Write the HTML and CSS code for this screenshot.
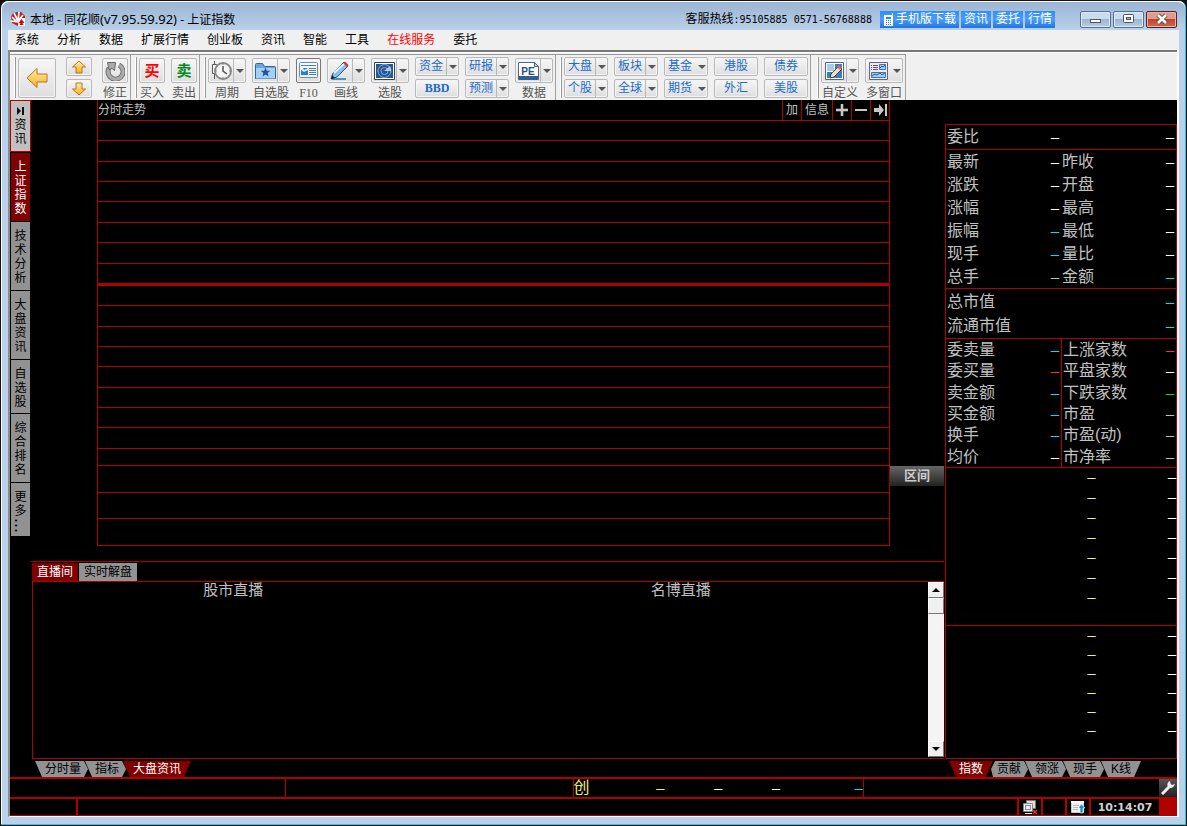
FILE: index.html
```html
<!DOCTYPE html>
<html lang="zh-CN">
<head>
<meta charset="utf-8">
<title>本地 - 同花顺(v7.95.59.92) - 上证指数</title>
<link rel="stylesheet" href="styles.css">
</head>
<body>
<div class="window">
  <header class="titlebar">
    <svg class="app-icon" width="16" height="16" viewBox="0 0 16 16"><path d="M1 6 3 2l4-1 4 0 4 4v9l-2 1H8L2 12z" fill="#b81c24"/><path d="m2 6 5 5M4 2l4 8M9 1 8 10M13 4l-5 6M1 10l7 1" stroke="#fff" stroke-width="1.700"/><path d="M8 7h7v8H8z" fill="#fff"/><path d="m11.500 8 3 4h-2l1 2h-4l1-2h-2z" fill="#d00"/></svg>
    <h1 class="title">本地 - 同花顺<span class="version">(v7.95.59.92)</span> - 上证指数</h1>
    <span class="hotline">客服热线<span class="phone">:95105885 0571-56768888</span></span>
    <nav class="promo">
      <a href="#"><svg width="11" height="13" viewBox="0 0 11 13"><path d="M1 2h8V0h1v13H1z" fill="#fff"/><path d="M3 4h5v2H3zM3 7h1v1H3zm2 0h1v1H5zm2 0h1v1H7zM3 9h1v1H3zm2 0h1v1H5zm2 0h1v1H7zm-4 2h1v1H3zm2 0h1v1H5zm2 0h1v1H7z" fill="#2a86ee"/></svg>手机版下载</a>
      <a href="#">资讯</a>
      <a href="#">委托</a>
      <a href="#">行情</a>
    </nav>
    <div class="controls">
      <button type="button" aria-label="最小化"><svg width="12" height="12" viewBox="0 0 12 12"><rect x=".5" y="6.500" width="10" height="3" fill="#fff" stroke="#555"/></svg></button>
      <button type="button" aria-label="最大化"><svg width="12" height="12" viewBox="0 0 12 12"><rect x=".5" y="1.500" width="10" height="8" rx="1" fill="#fff" stroke="#555"/><rect x="3.500" y="4.500" width="4" height="2" fill="#9bb5d3" stroke="#555"/></svg></button>
      <button type="button" class="close" aria-label="关闭"><svg width="14" height="12" viewBox="0 0 14 12"><path d="m3 2 8 8m0-8-8 8" stroke="#543" stroke-width="4.500"/><path d="m3 2 8 8m0-8-8 8" stroke="#fff" stroke-width="2.600"/></svg></button>
    </div>
  </header>

  <nav class="menubar">
    <button type="button">系统</button><button type="button">分析</button><button type="button">数据</button><button type="button">扩展行情</button><button type="button">创业板</button><button type="button">资讯</button><button type="button">智能</button><button type="button">工具</button><button type="button" class="hot">在线服务</button><button type="button">委托</button>
  </nav>

  <div class="client">
    <div class="toolbar">
      <div class="strip">
        <div class="group wide">
          <span class="grip"></span>
          <button type="button" class="btn back" aria-label="后退"><svg width="22" height="22" viewBox="0 0 22 22"><path d="m1 11 10-9.500V7h10v8H11v5.500z" fill="url(#gold)" stroke="#b8741a"/><defs><linearGradient id="gold" x2="0" y2="1"><stop stop-color="#fff0a8"/><stop offset="1" stop-color="#f5ac28"/></linearGradient></defs></svg></button>
          <div class="stack">
            <button type="button" class="btn small" aria-label="上移"><svg width="14" height="14" viewBox="0 0 14 14"><path d="m7 1 6.500 6H10v6H4V7H.5z" fill="url(#gold)" stroke="#b8741a"/></svg></button>
            <button type="button" class="btn small" aria-label="下移"><svg width="14" height="14" viewBox="0 0 14 14"><path d="m7 13 6.500-6H10V1H4v6H.5z" fill="url(#gold)" stroke="#b8741a"/></svg></button>
          </div>
          <label class="tile"><button type="button" class="btn"><svg width="20" height="20" viewBox="0 0 20 20"><path d="M4 7a7.500 7.500 0 1 0 10-3" fill="none" stroke="#666" stroke-width="5"/><path d="M4 7a7.500 7.500 0 1 0 10-3" fill="none" stroke="#aaa" stroke-width="3.400"/><path d="M2.500 1.500h8l-1 8-2.500-2-3 1z" fill="#aaa" stroke="#666"/></svg></button>修正</label>
        </div>
        <div class="group">
          <span class="grip"></span>
          <label class="tile"><button type="button" class="btn trade buy">买</button>买入</label>
          <label class="tile"><button type="button" class="btn trade sell">卖</button>卖出</label>
        </div>
        <div class="group">
          <span class="grip"></span>
          <label class="tile"><button type="button" class="btn split"><span class="face"><svg width="21" height="20" viewBox="0 0 21 20"><path d="M3.500 0v18" stroke="#555"/><path d="M1.500 3.500h4v9h-4z" fill="#fff" stroke="#555"/><circle cx="12" cy="10" r="8" fill="#f6f6f6" stroke="#888" stroke-width="2"/><path d="M12 5v5l4 3" fill="none" stroke="#555" stroke-width="1.500"/><path d="M12 2v2m0 12v2m-8-8h2m12 0h2" stroke="#888"/></svg></span><span class="arrow"></span></button>周期</label>
          <label class="tile"><button type="button" class="btn split"><span class="face"><svg width="21" height="18" viewBox="0 0 21 18"><path d="M.5 16.500v-14q0-1 1-1h6l2 3h10q1 0 1 1v11z" fill="#6ba6de" stroke="#31659c"/><path d="M1 6h19v10.500H1z" fill="#a5d0f3"/><path d="m10.500 5.500 1.300 3.200h3.500l-2.700 2.300 1 3.500-3.100-2-3.100 2 1-3.500-2.700-2.300h3.500z" fill="#1e5494"/></svg></span><span class="arrow"></span></button>自选股</label>
          <label class="tile f10"><button type="button" class="btn"><svg width="19" height="17" viewBox="0 0 19 17"><rect x=".5" y=".5" width="18" height="15" rx="1" fill="#f4f9ff" stroke="#6b8cb3"/><path d="M2 3h15v1H2zm8 3h7v1h-7zm0 2h7v1h-7zm0 2h7v1h-7zm0 2h7v1h-7z" fill="#4c7fb5"/><path d="M2 6h7v7H2z" fill="#2b7cd3"/><path d="M2 6h2l1 2 2-1 2-1v2L5 10 2 8z" fill="#dff0ff"/></svg></button>F10</label>
          <label class="tile"><button type="button" class="btn split"><span class="face"><svg width="22" height="20" viewBox="0 0 22 20"><path d="M3 18h14" stroke="#49b" stroke-width="2"/><path d="m2 18 2-6L15 1l4 4L8 16z" fill="#8cbde8" stroke="#245b94"/><path d="m5 12 11-10" stroke="#e5f3ff" stroke-width="2"/><path d="m14 2 2-1.500 3.500 3.500-1.500 2z" fill="#d33"/><path d="m2 18 1-4 3 3z" fill="#222"/></svg></span><span class="arrow"></span></button>画线</label>
          <label class="tile"><button type="button" class="btn split"><span class="face"><svg width="21" height="18" viewBox="0 0 21 18"><path d="M.5.5h20v17H.5z" fill="#fff" stroke="#345"/><path d="M2 2h17v14H2z" fill="#29548d"/><g fill="none" stroke="#7fb1e4"><circle cx="10.500" cy="9" r="6.500"/><circle cx="10.500" cy="9" r="3.500"/></g><path d="m10 9 6-5a7 7 0 0 1 1 5z" fill="#a5d0f3"/></svg></span><span class="arrow"></span></button>选股</label>
          <div class="stack">
            <button type="button" class="btn small split"><span class="face">资金</span><span class="arrow"></span></button>
            <button type="button" class="btn small bbd">BBD</button>
          </div>
          <div class="stack">
            <button type="button" class="btn small split"><span class="face">研报</span><span class="arrow"></span></button>
            <button type="button" class="btn small split"><span class="face">预测</span><span class="arrow"></span></button>
          </div>
          <label class="tile"><button type="button" class="btn split"><span class="face"><svg width="21" height="18" viewBox="0 0 21 18"><path d="M.5.5h16l4 4v13H.5z" fill="#fff" stroke="#567"/><path d="M1 14h19v4H1z" fill="#315f94"/><path d="M16.500.5v4h4z" fill="#ccd" stroke="#567"/><text x="10" y="13" text-anchor="middle" class="pe">PE</text></svg></span><span class="arrow"></span></button>数据</label>
        </div>
        <div class="group">
          <span class="grip"></span>
          <div class="stack">
            <button type="button" class="btn small split"><span class="face">大盘</span><span class="arrow"></span></button>
            <button type="button" class="btn small split"><span class="face">个股</span><span class="arrow"></span></button>
          </div>
          <div class="stack">
            <button type="button" class="btn small split"><span class="face">板块</span><span class="arrow"></span></button>
            <button type="button" class="btn small split"><span class="face">全球</span><span class="arrow"></span></button>
          </div>
          <div class="stack">
            <button type="button" class="btn small split plain"><span class="face">基金</span><span class="arrow"></span></button>
            <button type="button" class="btn small split plain"><span class="face">期货</span><span class="arrow"></span></button>
          </div>
          <div class="stack">
            <button type="button" class="btn small text">港股</button>
            <button type="button" class="btn small text">外汇</button>
          </div>
          <div class="stack">
            <button type="button" class="btn small text">债券</button>
            <button type="button" class="btn small text">美股</button>
          </div>
        </div>
        <div class="group last">
          <span class="grip"></span>
          <label class="tile"><button type="button" class="btn split"><span class="face"><svg width="19" height="18" viewBox="0 0 19 18"><path d="M.5.5h18v17H.5z" fill="#fff" stroke="#567"/><path d="M2 2h7v7H2z" fill="#a5ccf0"/><path d="M10 2h7v14H2v-6h8z" fill="#3d7cc0"/><path d="m5 16 1-4 8-8 3 3-8 8z" fill="#f2dfbd" stroke="#345"/><path d="m12 5 2-2 3 3-2 2z" fill="#d66"/></svg></span><span class="arrow"></span></button>自定义</label>
          <label class="tile"><button type="button" class="btn split plain"><span class="face"><svg width="19" height="18" viewBox="0 0 19 18"><path d="M.5.5h18v17H.5z" fill="#e8ecf2" stroke="#667"/><path d="M2 3h1v1H2zm2 0h5v1H4zM2 5h1v1H2zm2 0h5v1H4zM2 7h1v1H2zm2 0h5v1H4z" fill="#734b6b"/><path d="M10.500 2.500h6v5h-6zM2.500 10.500h14v5h-14z" fill="#a5ccf0" stroke="#4873a8"/><path d="m11 6 2-2 1 1 2-2M3 14l3-2 2 1 3-2 2 2 3-2" stroke="#245b94" fill="none"/></svg></span><span class="arrow"></span></button>多窗口</label>
        </div>
      </div>
    </div>

    <main class="workspace">
      <nav class="side">
        <button type="button" class="news"><svg width="8" height="8" viewBox="0 0 8 8"><path d="M0 0v8l4-4zM5 0h2v8H5z" fill="#111"/></svg><span>资讯</span></button>
        <button type="button" class="active"><span>上证指数</span></button>
        <button type="button"><span>技术分析</span></button>
        <button type="button"><span>大盘资讯</span></button>
        <button type="button"><span>自选股</span></button>
        <button type="button"><span>综合排名</span></button>
        <button type="button" class="more"><span>更多</span><i>...</i></button>
      </nav>

      <div class="center">
        <section class="chart">
          <div class="chart-head">
            <h2>分时走势</h2>
            <div class="chart-tools">
              <button type="button">加</button>
              <button type="button">信息</button>
              <button type="button" aria-label="放大"><svg width="12" height="12" viewBox="0 0 12 12"><path d="M5 0h2v5h5v2H7v5H5V7H0V5h5z" fill="#c8c8c8" stroke="#c8c8c8" stroke-width=".6"/></svg></button>
              <button type="button" aria-label="缩小"><svg width="12" height="12" viewBox="0 0 12 12"><path d="M0 5h12v2H0z" fill="#c8c8c8"/></svg></button>
              <button type="button" aria-label="右移"><svg width="13" height="12" viewBox="0 0 13 12"><path d="M0 4h5V0l5 6-5 6V8H0zM11 0h2v12h-2z" fill="#c8c8c8"/></svg></button>
            </div>
          </div>
          <div class="price">
            <i></i><i></i><i></i><i></i><i></i><i></i><i></i><i class="mid"></i><i></i><i></i><i></i><i></i><i></i><i></i><i></i><i></i><i class="gap"></i>
          </div>
          <div class="volume"><i></i><i></i><i></i></div>
          <button type="button" class="range">区间</button>
        </section>

        <section class="live">
          <div class="live-tabs">
            <button type="button" class="active">直播间</button>
            <button type="button">实时解盘</button>
          </div>
          <div class="live-body">
            <h3>股市直播</h3>
            <h3>名博直播</h3>
            <div class="scroll">
              <button type="button" aria-label="向上滚动"><svg width="8" height="4" viewBox="0 0 8 4"><path d="M4 0 8 4H0z"/></svg></button>
              <div class="thumb"></div>
              <button type="button" class="down" aria-label="向下滚动"><svg width="8" height="4" viewBox="0 0 8 4"><path d="M4 4 8 0H0z"/></svg></button>
            </div>
          </div>
        </section>

        <nav class="tabs">
          <button type="button">分时量</button>
          <button type="button">指标</button>
          <button type="button" class="active end">大盘资讯</button>
        </nav>
      </div>

      <aside class="quote">
        <div class="quote-box">
          <table class="q head">
            <tr><th>委比</th><td class="w">–</td><th></th><td class="w">–</td></tr>
          </table>
          <table class="q basic">
            <tr><th>最新</th><td class="w">–</td><th>昨收</th><td class="w">–</td></tr>
            <tr><th>涨跌</th><td class="w">–</td><th>开盘</th><td class="w">–</td></tr>
            <tr><th>涨幅</th><td class="w">–</td><th>最高</th><td class="w">–</td></tr>
            <tr><th>振幅</th><td class="c">–</td><th>最低</th><td class="w">–</td></tr>
            <tr><th>现手</th><td class="c">–</td><th>量比</th><td class="w">–</td></tr>
            <tr><th>总手</th><td>–</td><th>金额</th><td class="c">–</td></tr>
          </table>
          <table class="q cap">
            <tr><th>总市值</th><td></td><th></th><td class="c">–</td></tr>
            <tr><th>流通市值</th><td></td><th></th><td class="c">–</td></tr>
          </table>
          <table class="q market">
            <tr><th>委卖量</th><td class="c">–</td><th>上涨家数</th><td class="r">–</td></tr>
            <tr><th>委买量</th><td class="r">–</td><th>平盘家数</th><td class="w">–</td></tr>
            <tr><th>卖金额</th><td class="c">–</td><th>下跌家数</th><td class="g">–</td></tr>
            <tr><th>买金额</th><td class="c">–</td><th>市盈</th><td>–</td></tr>
            <tr><th>换手</th><td class="c">–</td><th>市盈(动)</th><td>–</td></tr>
            <tr><th>均价</th><td class="w">–</td><th>市净率</th><td>–</td></tr>
          </table>
          <div class="ticks upper">
            <table>
              <tr><td class="y">–</td><td class="w">–</td></tr>
              <tr><td class="y">–</td><td class="w">–</td></tr>
              <tr><td class="y">–</td><td class="w">–</td></tr>
              <tr><td class="y">–</td><td class="w">–</td></tr>
              <tr><td class="y">–</td><td class="w">–</td></tr>
              <tr><td class="y">–</td><td class="w">–</td></tr>
              <tr><td class="y">–</td><td class="w">–</td></tr>
            </table>
          </div>
          <div class="ticks lower">
            <table>
              <tr><td class="y">–</td><td class="w">–</td></tr>
              <tr><td class="y">–</td><td class="w">–</td></tr>
              <tr><td class="y">–</td><td class="w">–</td></tr>
              <tr><td class="y">–</td><td class="w">–</td></tr>
              <tr><td class="y">–</td><td class="w">–</td></tr>
              <tr><td class="y">–</td><td class="w">–</td></tr>
            </table>
          </div>
        </div>
        <nav class="tabs">
          <button type="button" class="active end">指数</button>
          <button type="button" class="lead">贡献</button>
          <button type="button">领涨</button>
          <button type="button">现手</button>
          <button type="button" class="end">K线</button>
        </nav>
      </aside>
    </main>

    <footer class="status">
      <div class="row quotes">
        <span class="cell first"></span>
        <span class="cell second"></span>
        <span class="cell index"><b>创</b><span class="y">–</span><span class="w">–</span><span class="w">–</span><span class="c wide-value">–</span></span>
        <span class="cell rest"></span>
        <button type="button" class="wrench" aria-label="设置"><svg width="14" height="14" viewBox="0 0 14 14"><path d="M1 13 8 6" stroke="#eee" stroke-width="3"/><path d="M9 0a4 4 0 0 0-2 6 4 4 0 0 0 6-1l1-2-3 1-1.500-1.500z" fill="#eee"/></svg></button>
      </div>
      <div class="row system">
        <span class="cell slot"></span>
        <span class="cell message"></span>
        <span class="cell icon"><svg width="16" height="15" viewBox="0 0 16 15"><path d="M4.500.5h9v8h-9z" fill="#ddd" stroke="#777"/><path d="M1.500 3.500h9v8h-9z" fill="#eee" stroke="#888"/><path d="M3 5h6v5H3z" fill="#889"/><path d="M4 6h4v3H4zM3 13h7v1H3z" fill="#eee"/><path d="m11 10 4 4m0-4-4 4" stroke="#e33a22" stroke-width="1.500"/></svg></span>
        <span class="cell blank"></span>
        <span class="cell icon"><svg width="15" height="14" viewBox="0 0 15 14"><path d="M.5 1.500h12v11H.5z" fill="#f2f2f2" stroke="#ccc"/><path d="M0 1h13v2H0z" fill="#fff"/><path d="M2 5h6v1H2zm0 2h5v1H2zm0 2h5v1H2z" fill="#bbb"/><path d="m10.500 4 3.500 4h-2v5H9V8H7z" fill="#1a8de0" stroke="#fff" stroke-width=".6"/></svg></span>
        <time class="cell clock">10:14:07</time>
        <span class="corner"></span>
      </div>
    </footer>
  </div>
</div>
</body>
</html>
```
FILE: styles.css
```css
:root {
  --red: #b00000;
  --dark-red: #800000;
  --grey: #929292;
  --text: #c0c0c0;
}

* { box-sizing: border-box; }

body {
  margin: 0;
  background: #111;
  color: #000;
  font: 12px/16px "Liberation Sans", "Noto Sans CJK SC", sans-serif;
}

h1, h2, h3 { margin: 0; font-size: 12px; font-weight: 400; }
button { margin: 0; padding: 0; border: 0; background: none; color: inherit; font: inherit; white-space: nowrap; }
a { color: inherit; text-decoration: none; }
svg { display: block; flex: none; }
i { font-style: normal; }

.w { color: #fff; }
.c { color: #00e0f0; }
.r { color: #ff3030; }
.g { color: #00e000; }
.y { color: #f0f070; }

/* window frame */
.window {
  display: flex;
  flex-direction: column;
  min-height: 100vh;
  padding: 0 7px 8px;
  border: 1px solid #111;
  border-radius: 8px 8px 0 0;
  background: #b9d1ea;
  box-shadow: inset -1px -1px 0 #25c8e8, inset 1px 1px 0 #fff;
}

.titlebar {
  display: flex;
  align-items: center;
  height: 29px;
  margin: 0 -6px;
  padding: 6px 8px 0 8px;
  background: linear-gradient(#9ab4d2, #b9d1ea);
  background-clip: padding-box;
  border-top: 1px solid #fff;
  border-radius: 7px 7px 0 0;
}
.app-icon { margin-right: 4px; }
.title { flex: 1; font-family: "Noto Sans", "Noto Sans CJK SC", sans-serif; }
.version { font-size: 13px; }
.phone { font-family: "DejaVu Sans Mono", monospace; font-size: 10px; }
.promo { display: flex; gap: 2px; margin-left: 8px; }
.promo a {
  display: flex;
  align-items: center;
  gap: 2px;
  height: 17px;
  padding: 0 3px;
  background: linear-gradient(#2f8ff2, #4a9df5 50%, #1f74e4);
  color: #fff;
}
.controls { display: flex; gap: 2px; margin-left: 25px; }
.controls button {
  display: grid;
  place-items: center;
  width: 31px;
  height: 17px;
  border: 1px solid #56708f;
  border-radius: 2px;
  background: linear-gradient(#c9dbee 50%, #9cb6d2 50%, #b5cde6);
  box-shadow: inset 0 0 0 1px #dce8f5;
}
.controls .close {
  border-color: #5c1e1e;
  background: linear-gradient(#dd9c8e 50%, #bd4330 50%, #cc6a4c);
  box-shadow: inset 0 0 0 1px #e6b3a6;
}

.menubar {
  display: flex;
  gap: 18px;
  height: 20px;
  padding-left: 7px;
  background: #f0f0f0;
}
.menubar .hot { color: #f00; }

.client {
  display: flex;
  flex: 1;
  flex-direction: column;
  border: solid #fff;
  border-width: 0 2px 1px;
  border-left-color: #8c8c8c;
  background: #000;
}

/* toolbar */
.toolbar {
  display: flex;
  padding-top: 2px;
  border-top: 2px solid #777;
  background: #f0f0f0;
  box-shadow: inset 0 1px 0 #fff;
}
.strip { display: flex; height: 46px; border-top: 1px solid #9a9a9a; }
.group { display: flex; gap: 6px; padding: 2px 2px 0 4px; border-right: 1px solid #a0a0a0; }
.group.wide { gap: 10px; }
.grip { width: 2px; margin: 0 -4px 2px 0; border-right: 1px solid #999; background: #fff; }
.wide .grip { margin-right: -8px; }
.group.last { padding-left: 6px; }
.stack { display: flex; flex-direction: column; gap: 3px; }
.btn {
  display: flex;
  align-items: center;
  justify-content: center;
  border: 1px solid #b8b8b8;
  border-radius: 2px;
  background: linear-gradient(#f6f6f6, #dedede);
  box-shadow: inset 0 0 0 1px #f4f4f4;
}
.btn.back { width: 38px; height: 40px; margin-top: 1px; }
.btn.small { width: 44px; height: 19px; color: #1c6ac8; line-height: 17px; }
.wide .btn.small { width: 26px; }
.btn.bbd { font-family: "Liberation Serif", serif; font-weight: 700; font-size: 12px; }
.split .face { display: flex; flex: 1; align-items: center; justify-content: center; align-self: stretch; }
.split .arrow { display: grid; width: 12px; place-items: center; align-self: stretch; border-left: 1px solid #b8b8b8; }
.split .arrow::before { content: ""; border: solid transparent; border-width: 4px 4px 0; border-top-color: #555; }
.plain .arrow { border-left-color: transparent; }
.tile {
  display: flex;
  flex-direction: column;
  align-items: center;
  width: 38px;
  padding-top: 1px;
  color: #555;
  line-height: 20px;
  white-space: nowrap;
}
.tile .btn { width: 100%; height: 25px; flex: none; }
.wide .tile, .tile:has(.trade) { width: 26px; }
.tile.f10 { width: 25px; font-family: "Liberation Serif", serif; }
.tile.f10 .btn { border-color: #777; }
.trade { font-size: 15px; font-weight: 700; }
.buy { color: #f00; }
.sell { color: #008a20; }
.pe { fill: #27527f; font: bold 10px "Liberation Sans", sans-serif; }

/* workspace */
.workspace { display: grid; flex: 1; grid-template-columns: 21px 1fr 233px; }

.side { display: flex; flex-direction: column; gap: 1px; padding: 0 1px; }
.side button {
  display: flex;
  flex-direction: column;
  align-items: center;
  justify-content: center;
  height: 68px;
  padding-top: 2px;
  background: var(--grey);
  color: #000;
}
.side span { width: 12px; line-height: 14px; white-space: normal; word-break: break-all; }
.side .news { height: 52px; margin: 0 -1px; padding: 0; border: 1px solid var(--red); background: var(--text); }
.side .news svg { margin-bottom: 3px; }
.side .active { background: var(--dark-red); color: #fff; }
.side button:nth-child(5) { height: 53px; }
.side .more { height: 53px; justify-content: flex-start; padding-top: 7px; }
.side .more i { font-size: 18px; line-height: 12px; writing-mode: vertical-rl; }

.center { display: flex; flex-direction: column; min-width: 0; }

.chart {
  display: grid;
  flex: 1;
  grid-template-columns: 66px 1fr 54px;
  grid-template-rows: 20px 345fr 80fr 15px;
}
.chart > * { grid-column: 2; }
.chart-head {
  display: flex;
  justify-content: space-between;
  border: solid var(--red);
  border-width: 0 1px 0 1px;
  color: var(--text);
}
.chart-head h2 { line-height: 20px; }
.chart-tools { display: flex; }
.chart-tools button {
  display: grid;
  place-items: center;
  min-width: 19px;
  padding: 0 3px;
  border-left: 1px solid var(--red);
}
.chart-tools button:nth-child(n+3) { padding: 0; }
.price, .volume { display: flex; flex-direction: column; border: solid var(--red); border-width: 0 1px; }
.price { border-top-width: 1px; }
.price i, .volume i { flex: 1; border-bottom: 1px solid var(--red); }
.price .mid { border-bottom-width: 3px; }
.price .gap { flex-grow: 0; flex-basis: 17px; }
.chart .range {
  grid-column: 3;
  grid-row: 3;
  height: 20px;
  background: linear-gradient(#666, #222);
  color: #ccc;
  font-size: 13px;
  font-weight: 700;
  align-self: start;
}

.live { display: flex; flex-direction: column; height: 198px; border-top: 1px solid var(--red); }
.live-tabs { display: flex; gap: 1px; padding: 1px 0 0 1px; }
.live-tabs button { height: 18px; padding: 0 5px; background: var(--grey); color: #000; }
.live-tabs .active { background: var(--dark-red); color: #fff; }
.live-body {
  display: flex;
  flex: 1;
  margin-left: 1px;
  border: solid var(--red);
  border-width: 1px 0 1px 1px;
}
.live-body h3 { flex: 1; padding-right: 47px; color: var(--text); font-size: 15px; text-align: center; }
.scroll {
  display: flex;
  flex-direction: column;
  width: 16px;
  margin-bottom: 1px;
  background: #f4f4f4;
}
.scroll button, .thumb {
  display: grid;
  place-items: center;
  height: 16px;
  border: 1px solid;
  border-color: #fff #777 #777 #fff;
  background: #f0f0f0;
}
.scroll .down { margin-top: auto; }

/* slanted sheet tabs */
.tabs { display: flex; height: 18px; padding: 2px 0 0 4px; }
.quote .tabs { padding-left: 5px; }
.tabs button {
  margin-right: -3px;
  padding: 0 7px 0 10px;
  background: var(--grey);
  color: #000;
  clip-path: polygon(0 0, calc(100% - 4px) 0, 100% 50%, calc(100% - 4px) 100%, 7px 100%);
}
.tabs button.end { padding: 0 10px; clip-path: polygon(0 0, 100% 0, calc(100% - 7px) 100%, 7px 100%); }
.tabs button.lead { padding-left: 7px; clip-path: polygon(5px 0, calc(100% - 4px) 0, 100% 50%, calc(100% - 4px) 100%, 3px 100%, 1px 50%); }
.tabs button.active { background: var(--dark-red); color: #fff; }

/* quote panel */
.quote { display: flex; flex-direction: column; padding-top: 24px; }
.quote-box {
  display: flex;
  flex: 1;
  flex-direction: column;
  margin-left: 1px;
  border: 1px solid var(--red);
}
.quote table { width: 100%; border-spacing: 0; table-layout: fixed; }
.quote .q { border-bottom: 1px solid var(--red); color: var(--text); font-size: 16px; }
.q tr { height: 23px; }
.q th { width: 35%; padding: 0 0 0 1px; font-weight: 400; line-height: 20px; text-align: left; white-space: nowrap; }
.q td { width: 15%; padding: 0 2px 0 0; line-height: 20px; text-align: right; }
.q.head tr, .q.cap tr { height: 24px; }
.q.cap { padding-top: 1px; }
.q.market { height: 129px; }
.q.market tr { height: 21px; }
.q.market th, .q.market td { padding-top: 1px; }
.q.market th:nth-child(3) { border-left: 1px solid var(--red); }
.q td, .ticks, .index span { font-family: "Liberation Serif", serif; }
.ticks { flex: 158; font-size: 16px; }
.ticks.lower { flex: 132; border-top: 1px solid var(--red); }
.ticks tr { height: 20px; }
.ticks.lower tr { height: 19px; }
.ticks td { width: 35%; padding: 0; line-height: 17px; text-align: right; vertical-align: top; }
.ticks td:first-child { width: 65%; }

/* status bars */
.status { border-bottom: 1px solid var(--red); }
.row { display: flex; height: 20px; border-top: 2px solid var(--red); }
.row.system { height: 18px; }
.cell { display: flex; align-items: center; justify-content: center; border-right: 1px solid var(--red); }
.quotes .first { flex: 276; }
.quotes .second { flex: 287; }
.quotes .index { flex: 290; font-size: 16px; }
.quotes .rest { flex: 296; border: 0; }
.index b { color: #f0f070; font-weight: 400; }
.index span { flex: 58; text-align: right; }
.index b + span { flex: 75; }
.index .wide-value { flex: 83; }
.wrench { display: grid; place-items: center; width: 18px; background: linear-gradient(#555, #222); }
.system .cell { border-right-width: 2px; }
.system .slot { width: 68px; }
.system .message { flex: 1; }
.system .icon, .system .blank { width: 24px; }
.system .clock { width: 68px; border: 0; color: #d0d0d0; font: bold 11px/15px "DejaVu Sans", sans-serif; }
.corner { width: 18px; background: var(--red); }
```
